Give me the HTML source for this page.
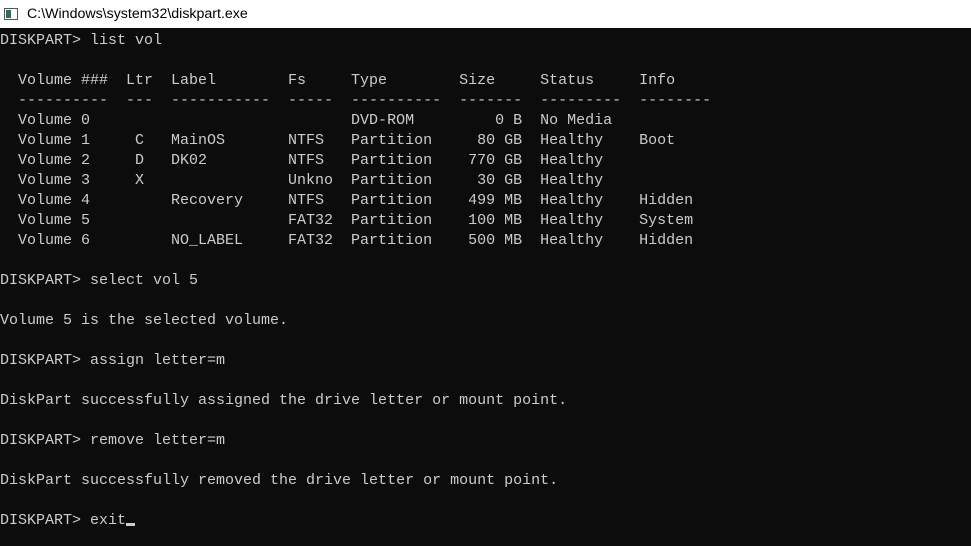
<!DOCTYPE html>
<html><head><style>
html,body{margin:0;padding:0;width:971px;height:546px;overflow:hidden;background:#0c0c0c}
#title{position:absolute;left:0;top:0;width:971px;height:28px;background:#fff;font:14.2px "Liberation Sans",sans-serif;color:#000}
#title span{position:absolute;left:27px;top:6px}
#icon{position:absolute;left:4px;top:8px;width:12px;height:10px;border:1px solid #555;background:#fff}
#icon:before{content:"";position:absolute;left:1px;top:1px;width:5px;height:8px;background:#2a6f5e}
pre{position:absolute;left:0;top:31px;margin:0;font:15px/20px "Liberation Mono",monospace;color:#cccccc}
.cur{display:inline-block;width:9px;height:3px;background:#ccc;vertical-align:-2px}
</style></head><body>
<div id="title"><div id="icon"></div><span>C:\Windows\system32\diskpart.exe</span></div>
<pre>DISKPART&gt; list vol

  Volume ###  Ltr  Label        Fs     Type        Size     Status     Info
  ----------  ---  -----------  -----  ----------  -------  ---------  --------
  Volume 0                             DVD-ROM         0 B  No Media
  Volume 1     C   MainOS       NTFS   Partition     80 GB  Healthy    Boot
  Volume 2     D   DK02         NTFS   Partition    770 GB  Healthy
  Volume 3     X                Unkno  Partition     30 GB  Healthy
  Volume 4         Recovery     NTFS   Partition    499 MB  Healthy    Hidden
  Volume 5                      FAT32  Partition    100 MB  Healthy    System
  Volume 6         NO_LABEL     FAT32  Partition    500 MB  Healthy    Hidden

DISKPART&gt; select vol 5

Volume 5 is the selected volume.

DISKPART&gt; assign letter=m

DiskPart successfully assigned the drive letter or mount point.

DISKPART&gt; remove letter=m

DiskPart successfully removed the drive letter or mount point.

DISKPART&gt; exit<span class="cur"></span></pre>
</body></html>
